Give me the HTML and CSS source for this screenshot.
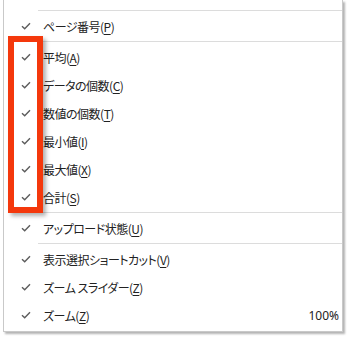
FILE: index.html
```html
<!DOCTYPE html>
<html lang="ja">
<head>
  <meta charset="UTF-8" />
  <meta name="viewport" content="width=device-width, initial-scale=1.0"/>
  <title>ステータスバーのカスタマイズ</title>

  <link rel="stylesheet" href="styles.css">
</head>
<body>
  <div class="menu">
    <div class="sep"></div>
    <div class="item"><span class="check"></span><span class="label">ページ番号(<u>P</u>)</span></div>
    <div class="sep"></div>
    <div class="item"><span class="check"></span><span class="label">平均(<u>A</u>)</span></div>
    <div class="item"><span class="check"></span><span class="label">データの個数(<u>C</u>)</span></div>
    <div class="item"><span class="check"></span><span class="label">数値の個数(<u>T</u>)</span></div>
    <div class="item"><span class="check"></span><span class="label">最小値(<u>I</u>)</span></div>
    <div class="item"><span class="check"></span><span class="label">最大値(<u>X</u>)</span></div>
    <div class="item"><span class="check"></span><span class="label">合計(<u>S</u>)</span></div>
    <div class="sep"></div>
    <div class="item"><span class="check"></span><span class="label">アップロード状態(<u>U</u>)</span></div>
    <div class="sep"></div>
    <div class="item"><span class="check"></span><span class="label">表示選択ショートカット(<u>V</u>)</span></div>
    <div class="item"><span class="check"></span><span class="label">ズーム スライダー(<u>Z</u>)</span></div>
    <div class="item"><span class="check"></span><span class="label">ズーム(<u>Z</u>)</span><span class="value">100%</span></div>
  </div>

  <div class="highlight"></div>

  <script>
    // same check glyph in every row
    const tick = '<svg width="10" height="8" viewBox="0 0 10 8"><path d="M1 4.2 L3.7 6.8 L9 1.2" fill="none" stroke="#5c5c5c" stroke-width="1.4"/></svg>';
    document.querySelectorAll(".check").forEach(el => el.innerHTML = tick);
  </script>
</body>
</html>
```

FILE: styles.css
```css
* {
  margin: 0;
  padding: 0;
  box-sizing: border-box;
}

body {
  font-family: "Noto Sans CJK JP", "Noto Sans", sans-serif;
  background-color: #fff;
  width: 353px;
  height: 340px;
  overflow: hidden;
  position: relative;
}

.menu {
  margin-left: 3px;
  width: 340px;
  padding: 9px 0 2px;
  background-color: #fff;
  border: 1px solid #c9c9c9;
  border-top: none;
  box-shadow: 2px 2px 2px rgba(0, 0, 0, 0.3);
}

.sep {
  height: 1px;
  margin: 1px 0 1px 34px;
  background-color: #dcdcdc;
}

.item {
  display: grid;
  grid-template-columns: 39px 1fr auto;
  align-items: center;
  height: 28px;
}

.check {
  display: flex;
  align-items: center;
  padding-left: 17px;
}

.check svg {
  display: block;
}

.label {
  font-size: 12px;
  letter-spacing: -0.5px;
  color: #222;
  font-feature-settings: "palt";
  white-space: nowrap;
}

.label u {
  text-underline-offset: 2px;
}

.value {
  font-family: "Noto Sans", sans-serif;
  font-size: 12px;
  color: #222;
  padding-right: 3px;
}

.highlight {
  position: absolute;
  left: 8px;
  top: 36px;
  width: 35px;
  height: 177px;
  border: 6px solid #f4380c;
  box-shadow: 3px 3px 4px rgba(0, 0, 0, 0.3);
}
```
